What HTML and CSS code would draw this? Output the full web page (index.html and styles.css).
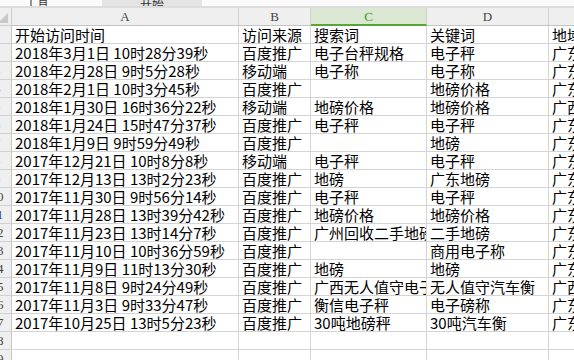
FILE: index.html
```html
<!DOCTYPE html>
<html lang="zh-CN">
<head>
<meta charset="utf-8">
<title>访问记录</title>
<link rel="stylesheet" href="styles.css">
</head>
<body>
<div class="sheet">
  <div class="tabs">
    <div class="tab-side"><span>工具</span></div>
    <div class="tab-active"><span>开始</span></div>
    <div class="tab-rest"></div>
  </div>
  <div class="grid">
    <div class="corner"><svg width="11" height="17" viewBox="0 0 11 17"><polygon points="8,5 8,15 -2,15" fill="#c9c9c9"/></svg></div>
    <div class="hd">A</div><div class="hd">B</div><div class="hd sel">C</div><div class="hd">D</div><div class="hd">E</div>

    <div class="rn"><span>1</span></div><div class="c">开始访问时间</div><div class="c">访问来源</div><div class="c">搜索词</div><div class="c">关键词</div><div class="c">地域</div>
    <div class="rn"><span>2</span></div><div class="c">2018年3月1日 10时28分39秒</div><div class="c">百度推广</div><div class="c">电子台秤规格</div><div class="c">电子秤</div><div class="c">广东</div>
    <div class="rn"><span>3</span></div><div class="c">2018年2月28日 9时5分28秒</div><div class="c">移动端</div><div class="c">电子称</div><div class="c">电子称</div><div class="c">广东</div>
    <div class="rn"><span>4</span></div><div class="c">2018年2月1日 10时3分45秒</div><div class="c">百度推广</div><div class="c"></div><div class="c">地磅价格</div><div class="c">广东</div>
    <div class="rn"><span>5</span></div><div class="c">2018年1月30日 16时36分22秒</div><div class="c">移动端</div><div class="c">地磅价格</div><div class="c">地磅价格</div><div class="c">广西</div>
    <div class="rn"><span>6</span></div><div class="c">2018年1月24日 15时47分37秒</div><div class="c">百度推广</div><div class="c">电子秤</div><div class="c">电子秤</div><div class="c">广东</div>
    <div class="rn"><span>7</span></div><div class="c">2018年1月9日 9时59分49秒</div><div class="c">百度推广</div><div class="c"></div><div class="c">地磅</div><div class="c">广东</div>
    <div class="rn"><span>8</span></div><div class="c">2017年12月21日 10时8分8秒</div><div class="c">移动端</div><div class="c">电子秤</div><div class="c">电子秤</div><div class="c">广东</div>
    <div class="rn"><span>9</span></div><div class="c">2017年12月13日 13时2分23秒</div><div class="c">百度推广</div><div class="c">地磅</div><div class="c">广东地磅</div><div class="c">广东</div>
    <div class="rn"><span>10</span></div><div class="c">2017年11月30日 9时56分14秒</div><div class="c">百度推广</div><div class="c">电子秤</div><div class="c">电子秤</div><div class="c">广东</div>
    <div class="rn"><span>11</span></div><div class="c">2017年11月28日 13时39分42秒</div><div class="c">百度推广</div><div class="c">地磅价格</div><div class="c">地磅价格</div><div class="c">广东</div>
    <div class="rn"><span>12</span></div><div class="c">2017年11月23日 13时14分7秒</div><div class="c">百度推广</div><div class="c">广州回收二手地磅</div><div class="c">二手地磅</div><div class="c">广东</div>
    <div class="rn"><span>13</span></div><div class="c">2017年11月10日 10时36分59秒</div><div class="c">百度推广</div><div class="c"></div><div class="c">商用电子称</div><div class="c">广东</div>
    <div class="rn"><span>14</span></div><div class="c">2017年11月9日 11时13分30秒</div><div class="c">百度推广</div><div class="c">地磅</div><div class="c">地磅</div><div class="c">广东</div>
    <div class="rn"><span>15</span></div><div class="c">2017年11月8日 9时24分49秒</div><div class="c">百度推广</div><div class="c">广西无人值守电子秤</div><div class="c">无人值守汽车衡</div><div class="c">广西</div>
    <div class="rn"><span>16</span></div><div class="c">2017年11月3日 9时33分47秒</div><div class="c">百度推广</div><div class="c">衡信电子秤</div><div class="c">电子磅称</div><div class="c">广东</div>
    <div class="rn"><span>17</span></div><div class="c">2017年10月25日 13时5分23秒</div><div class="c">百度推广</div><div class="c">30吨地磅秤</div><div class="c">30吨汽车衡</div><div class="c">广东</div>
    <div class="rn"><span>18</span></div><div class="c"></div><div class="c"></div><div class="c"></div><div class="c"></div><div class="c"></div>
    <div class="rn"><span>19</span></div><div class="c"></div><div class="c"></div><div class="c"></div><div class="c"></div><div class="c"></div>
  </div>
</div>
</body>
</html>
```
FILE: styles.css
```css
html, body {
  margin: 0;
  padding: 0;
  background: #ffffff;
  overflow: hidden;
}

.sheet {
  width: 574px;
  height: 360px;
  overflow: hidden;
}

.tabs {
  display: flex;
  height: 8px;
  box-sizing: border-box;
  border-bottom: 2px solid #dcdcdc;
  background: #fbfbfb;
  font: 12px/12px "Noto Sans CJK SC", sans-serif;
  color: #333;
}

.tab-side,
.tab-active {
  display: flex;
  align-items: flex-end;
  height: 6px;
  overflow: hidden;
}

.tab-side {
  width: 102px;
  padding-left: 25px;
  box-sizing: border-box;
}

.tab-active {
  width: 100px;
  background: #e4e4e4;
  justify-content: center;
}

.tab-side span,
.tab-active span {
  flex-shrink: 0;
  line-height: 12px;
  margin-bottom: -4px;
}

.tab-rest {
  flex: 1;
}

.grid {
  display: grid;
  grid-template-columns: 12px 227px 72px 116px 122px 120px;
  grid-auto-rows: 18px;
  width: max-content;
}

.grid > div {
  box-sizing: border-box;
  border-right: 1px solid #d4d4d4;
  border-bottom: 1px solid #d4d4d4;
  overflow: hidden;
  white-space: nowrap;
}

.corner {
  background: #efefef;
  border-color: #cdcdcd !important;
}

.corner svg {
  display: block;
}

.hd {
  background: #efefef;
  border-right-color: #d0d0d0 !important;
  border-bottom-color: #c4c4c4 !important;
  text-align: center;
  font: 13px/17px "Liberation Serif", serif;
  color: #444;
}

.hd.sel {
  background: #dae8d3;
  border-bottom: 2px solid #56a535 !important;
  color: #3a9a26;
}

.rn {
  display: flex;
  justify-content: flex-end;
  background: #efefef;
  border-right-color: #c8c8c8 !important;
  border-bottom-color: #d0d0d0 !important;
  font: 13px/17px "Liberation Serif", serif;
  color: #444;
}

.rn span {
  flex-shrink: 0;
  width: 28px;
  text-align: center;
}

.c {
  padding-left: 3px;
  font: 15px/17px "Noto Sans CJK SC", sans-serif;
  color: #000;
}
```
